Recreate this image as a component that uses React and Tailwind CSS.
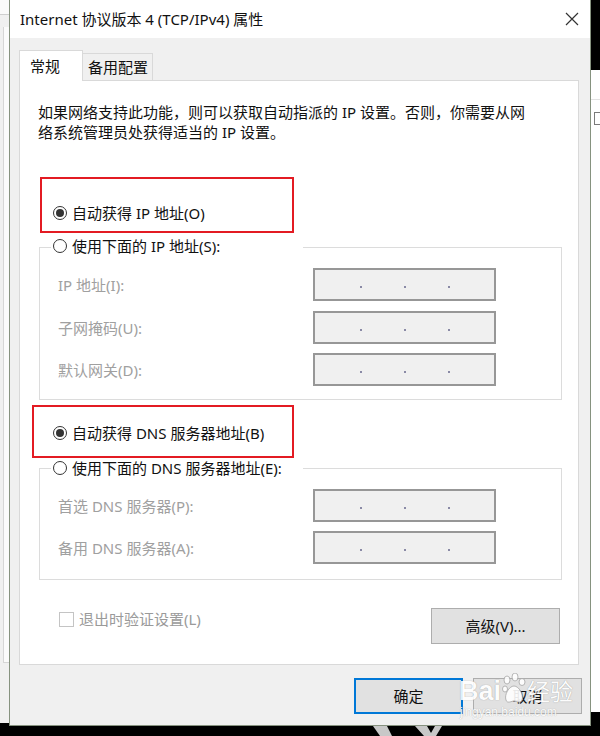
import React from 'react';

const Radio = ({ checked }) => (
  <span className="w-[14px] h-[14px] rounded-full border border-[#333333] bg-white flex items-center justify-center shrink-0">
    {checked && <span className="w-[8px] h-[8px] rounded-full bg-[#333333]" />}
  </span>
);

const IpBox = () => (
  <div className="w-[183px] h-[33px] border-2 border-[#979797] bg-[#f0f0f0] flex items-center pt-[5px] pl-[45px] gap-[42px] shrink-0">
    <span className="w-[2px] h-[2px] bg-[#8a8aa6]" />
    <span className="w-[2px] h-[2px] bg-[#8a8aa6]" />
    <span className="w-[2px] h-[2px] bg-[#8a8aa6]" />
  </div>
);

const Field = ({ label, extra }) => (
  <div className={'flex items-center h-[33px] ' + (extra || '')}>
    <span className="w-[273px] pl-[18px] text-[#a0a0a0] shrink-0 whitespace-nowrap">{label}</span>
    <IpBox />
  </div>
);

export default function App() {
  return (
    <div className="relative w-[600px] h-[736px] bg-black overflow-hidden flex flex-col font-['Noto_Sans','Noto_Sans_CJK_SC',sans-serif] text-[15px] leading-[20px] text-[#111111]">
      <div className="flex h-[726px]">
        {/* left background strip */}
        <div className="w-[9px] flex flex-col bg-[#f0f0f0] shrink-0">
          <div className="h-[15px] bg-[#fafafa] border-b border-[#cfcfcf]" />
          <div className="mt-[12px] ml-[3px] w-[6px] h-[636px] bg-[#fbfbfb] border-l border-b border-[#d6d6d6]" />
          <div className="flex-1" />
          <div className="h-[3px] bg-black" />
        </div>

        {/* dialog */}
        <div className="w-[582px] h-[726px] border-l border-r border-b border-[#86927f] flex flex-col shrink-0 bg-[#f0f0f0]">
          <div className="h-[38px] bg-white flex items-center justify-between pl-[10px] pr-[11px]">
            <span className="whitespace-nowrap">Internet 协议版本 4 (TCP/IPv4) 属性</span>
            <svg width="14" height="14" viewBox="0 0 14 14">
              <path d="M1 1 L13 13 M13 1 L1 13" stroke="#333333" strokeWidth="1.2" fill="none" />
            </svg>
          </div>

          <div className="flex-1 flex flex-col pt-[12px] pl-[9px]">
            {/* tabs */}
            <div className="h-[30px] flex items-end relative z-10">
              <div className="w-[64px] h-[31px] mb-[-1px] border border-b-0 border-[#d9d9d9] bg-white pl-[10px] flex items-center">
                常规
              </div>
              <div className="w-[70px] h-[27px] border-t border-r border-[#d9d9d9] bg-[#f0f0f0] pl-[5px] flex items-center">
                备用配置
              </div>
            </div>

            {/* panel */}
            <div className="w-[560px] h-[585px] bg-white border border-[#d9d9d9] flex flex-col items-start">
              <p className="mt-[21px] ml-[18px]">
                如果网络支持此功能，则可以获取自动指派的 IP 设置。否则，你需要从网
                <br />
                络系统管理员处获得适当的 IP 设置。
              </p>

              <div className="mt-[35px] ml-[20px] w-[254px] h-[56px] border-2 border-[#e31b23] pt-[24px] pl-[11px]">
                <div className="h-[20px] flex items-center gap-[5px] whitespace-nowrap">
                  <Radio checked />
                  <span>自动获得 IP 地址(O)</span>
                </div>
              </div>

              <div className="relative mt-[14px] ml-[19px] w-[523px] h-[153px] border border-[#dcdcdc] pt-[20px]">
                <div className="absolute left-[11px] top-[-12px] w-[252px] h-[20px] bg-white pl-[2px] flex items-center gap-[5px] whitespace-nowrap">
                  <Radio />
                  <span>使用下面的 IP 地址(S):</span>
                </div>
                <Field label="IP 地址(I):" />
                <Field label="子网掩码(U):" extra="mt-[10px]" />
                <Field label="默认网关(D):" extra="mt-[9px]" />
              </div>

              <div className="mt-[5px] ml-[12px] w-[262px] h-[53px] border-2 border-[#e31b23] pt-[16px] pl-[19px]">
                <div className="h-[20px] flex items-center gap-[5px] whitespace-nowrap">
                  <Radio checked />
                  <span>自动获得 DNS 服务器地址(B)</span>
                </div>
              </div>

              <div className="relative mt-[10px] ml-[19px] w-[523px] h-[112px] border border-[#dcdcdc] pt-[20px]">
                <div className="absolute left-[11px] top-[-11px] w-[252px] h-[20px] bg-white pl-[2px] flex items-center gap-[5px] whitespace-nowrap">
                  <Radio />
                  <span>使用下面的 DNS 服务器地址(E):</span>
                </div>
                <Field label="首选 DNS 服务器(P):" />
                <Field label="备用 DNS 服务器(A):" extra="mt-[9px]" />
              </div>

              <div className="mt-[28px] w-full flex justify-between items-start pl-[39px] pr-[18px]">
                <div className="mt-[1px] h-[20px] flex items-center gap-[5px] whitespace-nowrap">
                  <span className="w-[15px] h-[15px] border border-[#c4c4c4] bg-white shrink-0" />
                  <span className="text-[#9a9a9a]">退出时验证设置(L)</span>
                </div>
                <div className="w-[129px] h-[36px] border border-[#adadad] bg-[#e1e1e1] flex items-center justify-center">
                  高级(V)...
                </div>
              </div>
            </div>

            {/* footer buttons */}
            <div className="mt-[13px] ml-[335px] flex gap-[10px]">
              <div className="w-[109px] h-[36px] border-2 border-[#0078d7] bg-[#e1e1e1] flex items-center justify-center">
                确定
              </div>
              <div className="w-[109px] h-[36px] border border-[#adadad] bg-[#e1e1e1] flex items-center justify-center">
                取消
              </div>
            </div>
          </div>
        </div>

        {/* right background strip */}
        <div className="w-[9px] flex flex-col shrink-0">
          <div className="h-[70px] bg-black" />
          <div className="flex-1 bg-white flex flex-col">
            <div className="h-[30px] border-b border-[#e3e3e3]" />
            <div className="mt-[12px] ml-[3px] w-[8px] h-[13px] border border-[#7a7a7a]" />
          </div>
          <div className="h-[14px] bg-black" />
        </div>
      </div>

      {/* bottom desktop strip */}
      <svg width="600" height="10" viewBox="0 0 600 10" className="block">
        <polygon points="373,0 387,0 392,10 380,10" fill="#c8c8c8" />
        <polygon points="415,0 427,0 431,7 435,0 442,0 436,10 424,10" fill="#c8c8c8" />
      </svg>

      {/* watermark */}
      <div className="absolute left-[459px] top-[670px] flex flex-col items-start pointer-events-none opacity-90">
        <div className="flex items-end h-[36px]">
          <span className="text-[27px] leading-[30px] font-bold text-white font-['Liberation_Sans',sans-serif] [text-shadow:0_0_1px_#8a8a8a]">Bai</span>
          <svg width="26" height="32" viewBox="0 0 26 32" className="mb-[1px]">
            <g fill="#ffffff" stroke="#a0a0a0" strokeWidth="0.8">
              <ellipse cx="6" cy="7" rx="3" ry="4" />
              <ellipse cx="14" cy="4" rx="3" ry="4" />
              <ellipse cx="21" cy="9" rx="3" ry="3.5" />
              <ellipse cx="4" cy="16" rx="2.5" ry="3" />
              <path d="M13 13 C18 13 23 22 21 27 C19 31 15 28 13 28 C11 28 6 31 5 27 C3 22 8 13 13 13 Z" />
            </g>
          </svg>
          <span className="text-[23px] leading-[30px] text-white [text-shadow:0_0_1px_#8a8a8a]">经验</span>
        </div>
        <span className="ml-[1px] text-[12px] leading-[12px] text-white [text-shadow:0_0_1px_#9a9a9a] font-['Liberation_Sans',sans-serif]">jingyan.baidu.com</span>
      </div>
    </div>
  );
}
